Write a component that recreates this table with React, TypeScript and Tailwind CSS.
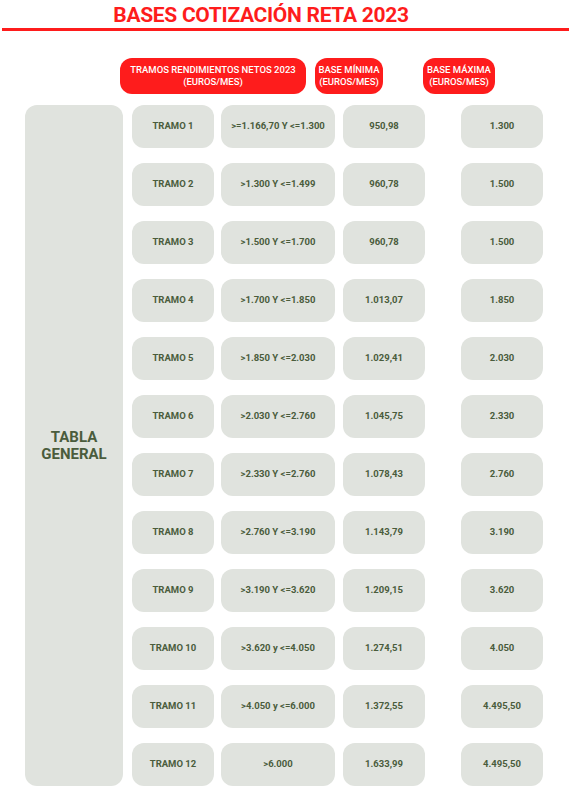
const rows = [
  { tramo: "TRAMO 1", range: ">=1.166,70 Y <=1.300", min: "950,98", max: "1.300" },
  { tramo: "TRAMO 2", range: ">1.300 Y <=1.499", min: "960,78", max: "1.500" },
  { tramo: "TRAMO 3", range: ">1.500 Y <=1.700", min: "960,78", max: "1.500" },
  { tramo: "TRAMO 4", range: ">1.700 Y <=1.850", min: "1.013,07", max: "1.850" },
  { tramo: "TRAMO 5", range: ">1.850 Y <=2.030", min: "1.029,41", max: "2.030" },
  { tramo: "TRAMO 6", range: ">2.030 Y <=2.760", min: "1.045,75", max: "2.330" },
  { tramo: "TRAMO 7", range: ">2.330 Y <=2.760", min: "1.078,43", max: "2.760" },
  { tramo: "TRAMO 8", range: ">2.760 Y <=3.190", min: "1.143,79", max: "3.190" },
  { tramo: "TRAMO 9", range: ">3.190 Y <=3.620", min: "1.209,15", max: "3.620" },
  { tramo: "TRAMO 10", range: ">3.620 y <=4.050", min: "1.274,51", max: "4.050" },
  { tramo: "TRAMO 11", range: ">4.050 y <=6.000", min: "1.372,55", max: "4.495,50" },
  { tramo: "TRAMO 12", range: ">6.000", min: "1.633,99", max: "4.495,50" },
];

function Cell({ w, children }: { w: string; children: React.ReactNode }) {
  return (
    <div
      className={`${w} h-[43px] rounded-[12px] bg-[#e0e3de] flex items-center justify-center text-[9.5px] font-bold text-[#4a5c3c]`}
    >
      {children}
    </div>
  );
}

export default function App() {
  return (
    <div className="w-[571px] h-[806px] bg-white font-['Roboto',sans-serif]">
      <h1 className="pt-[3px] pr-[49px] text-center text-[21px] leading-[24px] tracking-[-0.3px] font-bold text-[#fe1c1c]">
        BASES COTIZACIÓN RETA 2023
      </h1>
      <div className="mt-[1px] mx-[2px] h-[3px] bg-[#fe1c1c]" />

      <div className="flex mt-[27px] pl-[120px] text-white text-[9.5px] font-medium leading-[12px] text-center">
        <div className="w-[186px] h-[36px] rounded-[12px] bg-[#fe1c1c] flex items-center justify-center">
          TRAMOS RENDIMIENTOS NETOS 2023
          <br />
          (EUROS/MES)
        </div>
        <div className="ml-[9px] w-[68px] h-[36px] rounded-[12px] bg-[#fe1c1c] flex items-center justify-center">
          BASE MÍNIMA
          <br />
          (EUROS/MES)
        </div>
        <div className="ml-[40px] w-[72px] h-[36px] rounded-[12px] bg-[#fe1c1c] flex items-center justify-center">
          BASE MÁXIMA
          <br />
          (EUROS/MES)
        </div>
      </div>

      <div className="flex mt-[11px] pl-[25px]">
        <div className="w-[98px] rounded-[12px] bg-[#e0e3de] flex items-center justify-center text-center text-[15px] leading-[17px] font-bold text-[#4a5c3c]">
          TABLA
          <br />
          GENERAL
        </div>
        <div className="ml-[9px] flex flex-col gap-[15px]">
          {rows.map((r) => (
            <div key={r.tramo} className="flex">
              <Cell w="w-[82px]">{r.tramo}</Cell>
              <div className="ml-[7px]">
                <Cell w="w-[114px]">{r.range}</Cell>
              </div>
              <div className="ml-[8px]">
                <Cell w="w-[82px]">{r.min}</Cell>
              </div>
              <div className="ml-[36px]">
                <Cell w="w-[82px]">{r.max}</Cell>
              </div>
            </div>
          ))}
        </div>
      </div>
    </div>
  );
}
